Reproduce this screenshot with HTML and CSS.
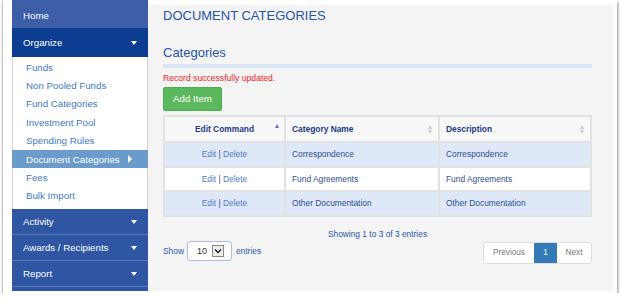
FILE: index.html
```html
<!DOCTYPE html>
<html lang="en">
<head>
  <meta charset="UTF-8">
  <title>Document Categories</title>
  <link rel="stylesheet" href="styles.css">
</head>
<body>
  <div class="frame">
    <div class="sidebar">
      <a href="javascript:;" class="nav-top home">Home</a>
      <a href="javascript:;" class="nav-top open">Organize <span class="caret"></span></a>
      <ul class="sub-nav">
        <li><a href="javascript:;">Funds</a></li>
        <li><a href="javascript:;">Non Pooled Funds</a></li>
        <li><a href="javascript:;">Fund Categories</a></li>
        <li><a href="javascript:;">Investment Pool</a></li>
        <li><a href="javascript:;">Spending Rules</a></li>
        <li class="active"><a href="javascript:;">Document Categories <span class="arrow"></span></a></li>
        <li><a href="javascript:;">Fees</a></li>
        <li><a href="javascript:;">Bulk Import</a></li>
      </ul>
      <a href="javascript:;" class="nav-top">Activity <span class="caret"></span></a>
      <a href="javascript:;" class="nav-top">Awards / Recipients <span class="caret"></span></a>
      <a href="javascript:;" class="nav-top">Report <span class="caret"></span></a>
      <a href="javascript:;" class="nav-top"></a>
    </div>

    <div class="main">
      <h1 class="page-title">DOCUMENT CATEGORIES</h1>
      <h2 class="section-title">Categories</h2>
      <div class="rule"></div>
      <p class="notice">Record successfully updated.</p>
      <a href="javascript:;" class="btn-add">Add Item</a>

      <table class="grid">
        <thead>
          <tr>
            <th class="col-cmd">Edit Command<span class="sort-up"></span></th>
            <th class="col-name">Category Name<span class="sort-both"></span></th>
            <th class="col-desc">Description<span class="sort-both"></span></th>
          </tr>
        </thead>
        <tbody>
          <tr class="odd">
            <td class="cmd"><a href="javascript:;">Edit</a> | <a href="javascript:;">Delete</a></td>
            <td>Correspondence</td>
            <td>Correspondence</td>
          </tr>
          <tr class="even">
            <td class="cmd"><a href="javascript:;">Edit</a> | <a href="javascript:;">Delete</a></td>
            <td>Fund Agreements</td>
            <td>Fund Agreements</td>
          </tr>
          <tr class="odd">
            <td class="cmd"><a href="javascript:;">Edit</a> | <a href="javascript:;">Delete</a></td>
            <td>Other Documentation</td>
            <td>Other Documentation</td>
          </tr>
        </tbody>
      </table>

      <div class="info">Showing 1 to 3 of 3 entries</div>

      <div class="grid-foot">
        <div class="length">
          <span>Show</span>
          <div class="select">
            <span>10</span>
            <span class="drop">
              <svg width="10" height="10" viewBox="0 0 10 10"><path d="M2 3.5 L5 6.5 L8 3.5" fill="none" stroke="#222" stroke-width="1.4"/></svg>
            </span>
          </div>
          <span>entries</span>
        </div>
        <div class="pager">
          <a href="javascript:;" class="prev">Previous</a>
          <a href="javascript:;" class="cur">1</a>
          <a href="javascript:;" class="next">Next</a>
        </div>
      </div>
    </div>
  </div>
</body>
</html>
```

FILE: styles.css
```css
*{
  margin: 0;
  padding: 0;
  box-sizing: border-box;
}
li{
  list-style: none;
}
a{
  text-decoration: none;
}
body{
  background: #fff;
  font-family: "Liberation Sans", Arial, sans-serif;
  overflow: hidden;
}

.frame{
  display: flex;
  align-items: flex-start;
  width: 615px;
  height: 293px;
  margin-left: 2px;
  padding: 0 4px 0 9px;
  background: #fff;
  border-left: 1px solid #c8c8c8;
  box-shadow: 1px 2px 3px rgba(0,0,0,.45);
}

/* sidebar */
.sidebar{
  width: 136px;
  height: 291px;
  flex-shrink: 0;
  overflow: hidden;
}
.nav-top{
  display: flex;
  align-items: center;
  justify-content: space-between;
  height: 26px;
  padding: 0 11px;
  color: #fff;
  font-size: 9.7px;
  background: #2f56a3;
  border-bottom: 1px solid #5878b9;
}
.nav-top.home{
  height: 28px;
  padding-top: 2px;
  background: #3c5fa8;
  border-bottom: 0;
}
.nav-top.open{
  height: 29px;
  background: #0c3c90;
  border-bottom: 0;
}
.caret{
  width: 0;
  height: 0;
  border-left: 3.5px solid transparent;
  border-right: 3.5px solid transparent;
  border-top: 4px solid #fff;
}
.sub-nav{
  background: #fff;
  border-left: 1px solid #d2d2d2;
  border-right: 1px solid #d2d2d2;
  padding: 1px 0 4px;
}
.sub-nav li a{
  display: flex;
  align-items: center;
  height: 18.4px;
  padding-left: 13px;
  color: #3b7bc3;
  font-size: 9.7px;
}
.sub-nav li.active a{
  margin: 0 -1px;
  padding-left: 14px;
  background: #6b9bcb;
  color: #fff;
}
.arrow{
  width: 0;
  height: 0;
  margin-left: 8px;
  border-top: 4px solid transparent;
  border-bottom: 4px solid transparent;
  border-left: 4px solid #fff;
}

/* main */
.main{
  flex: 1;
  height: 286px;
  margin-top: 5px;
  padding: 3px 21px 0 15px;
  background: #f4f4f4;
}
.page-title{
  font-size: 13px;
  line-height: 16px;
  font-weight: normal;
  color: #2456a6;
}
.section-title{
  margin-top: 21px;
  font-size: 13px;
  line-height: 16px;
  font-weight: normal;
  color: #2456a6;
}
.rule{
  height: 4px;
  margin-top: 3px;
  background: #d9e4f4;
}
.notice{
  margin-top: 4px;
  font-size: 8.6px;
  line-height: 12px;
  color: #f01c1c;
}
.btn-add{
  display: block;
  width: 59px;
  height: 24px;
  margin-top: 3px;
  background: #5cb85c;
  border: 1px solid #4cae4c;
  border-radius: 2px;
  color: #fff;
  font-size: 9.7px;
  line-height: 22px;
  text-align: center;
}

.grid{
  width: 429px;
  margin-top: 4px;
  border-collapse: collapse;
  font-size: 8.4px;
}
.grid th{
  position: relative;
  height: 26px;
  padding: 0 6px;
  background: #f7f7f7;
  border: 2px solid #e2e2e2;
  color: #1c3d88;
  text-align: left;
}
.grid th.col-cmd{
  width: 121px;
  text-align: center;
}
.grid th.col-name{
  width: 154px;
}
.grid td{
  height: 24.6px;
  padding: 0 6px;
  border: 2px solid #e2e2e2;
  color: #2c4f93;
}
.grid tr.odd td{
  background: #dfe8f6;
}
.grid tr.even td{
  background: #fff;
}
.grid td.cmd{
  text-align: center;
}
.grid td.cmd a{
  color: #4b7dc5;
}
.sort-up{
  position: absolute;
  right: 5px;
  top: 7px;
  width: 0;
  height: 0;
  border-left: 2.5px solid transparent;
  border-right: 2.5px solid transparent;
  border-bottom: 4px solid #6d70c9;
}
.sort-both{
  position: absolute;
  right: 5px;
  top: 8px;
  width: 5px;
  height: 9px;
}
.sort-both::before, .sort-both::after{
  content: "";
  position: absolute;
  left: 0;
  border-left: 2.5px solid transparent;
  border-right: 2.5px solid transparent;
}
.sort-both::before{
  top: 0;
  border-bottom: 4px solid #cdcdcd;
}
.sort-both::after{
  bottom: 0;
  border-top: 4px solid #cdcdcd;
}

.info{
  width: 429px;
  margin-top: 11px;
  text-align: center;
  font-size: 8.4px;
  line-height: 12px;
  color: #2a5aa8;
}
.grid-foot{
  display: flex;
  justify-content: space-between;
  align-items: flex-start;
  width: 429px;
  margin-top: 1px;
}
.length{
  display: flex;
  align-items: center;
  height: 20px;
  font-size: 8.4px;
  color: #2b5aa8;
}
.select{
  display: flex;
  align-items: center;
  width: 45px;
  height: 20px;
  margin: 0 4px 0 3px;
  padding: 0 7px 0 9px;
  background: #fff;
  border: 1px solid #a8bfe0;
  border-radius: 3px;
  font-size: 9px;
  color: #333;
}
.drop{
  display: flex;
  align-items: center;
  justify-content: center;
  width: 12px;
  height: 12px;
  margin-left: auto;
  background: #ececec;
  border: 1px solid #8a8a8a;
}
.pager{
  display: flex;
  height: 22px;
  margin-top: 1px;
  background: #fff;
  border: 1px solid #ddd;
  border-radius: 3px;
  overflow: hidden;
}
.pager a{
  display: block;
  height: 20px;
  line-height: 20px;
  text-align: center;
  font-size: 8.2px;
  color: #777;
}
.pager .prev{
  width: 50px;
}
.pager .cur{
  width: 23px;
  background: #337ab7;
  color: #fff;
}
.pager .next{
  width: 34px;
}
```
